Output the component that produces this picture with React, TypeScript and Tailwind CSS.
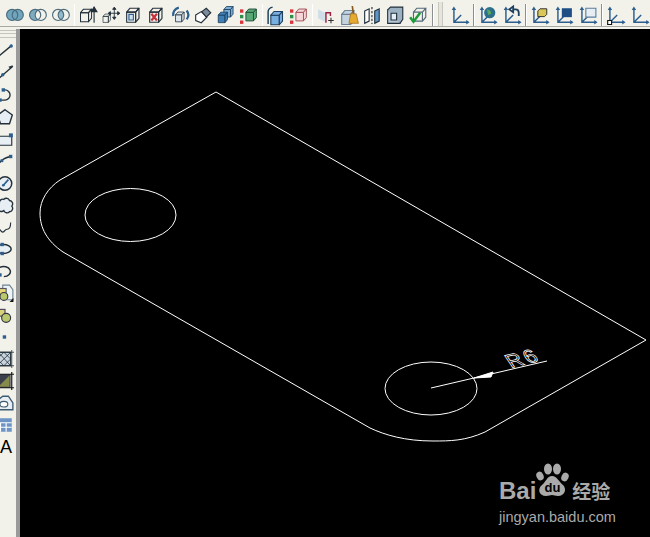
import React from 'react';

const AXIS = '#2c5f8f';
const DARK = '#23303a';

type Ic = React.ReactNode;

const Rings = ({ mode }: { mode: 'union' | 'subtract' | 'intersect' }) => (
	<>
		{mode === 'union' && (
			<>
				<circle cx="5.5" cy="8" r="5" fill="#6fa6bd" />
				<circle cx="10.5" cy="8" r="5" fill="#6fa6bd" />
			</>
		)}
		{mode === 'subtract' && <circle cx="5.5" cy="8" r="5" fill="#7fabbe" />}
		{mode === 'subtract' && <circle cx="10.5" cy="8" r="5" fill="#f2f1ea" />}
		{mode === 'intersect' && <path d="M8 3.7a5 5 0 0 1 0 8.6a5 5 0 0 1 0-8.6z" fill="#8fb8ca" />}
		<circle cx="5.5" cy="8" r="5" fill="none" stroke="#4a6b7c" />
		<circle cx="10.5" cy="8" r="5" fill="none" stroke="#4a6b7c" />
	</>
);

const Cube = ({ x = 0, y = 0, s = 1, fill = 'none', side = 'none', stroke = DARK }: { x?: number; y?: number; s?: number; fill?: string; side?: string; stroke?: string }) => (
	<g transform={`translate(${x} ${y}) scale(${s})`} stroke={stroke} strokeLinejoin="round">
		<path d="M1.5 5.5h8v9h-8z" fill={fill} />
		<path d="M1.5 5.5l3-3.5h8l-3 3.5z" fill={side === 'none' ? fill : side} />
		<path d="M9.5 5.5l3-3.5v9l-3 3.5z" fill={side === 'none' ? fill : side} />
	</g>
);

// the L shaped axis pair that all the UCS buttons share
const Ucs = ({ children }: { children?: Ic }) => (
	<>
		<path d="M3.5 2v12.5H16M3.5 14.5L10 8" fill="none" stroke={AXIS} strokeWidth="1.3" />
		<path d="M3.5 0.5l-2 3h4zM17.5 14.5l-3-2v4z" fill={AXIS} />
		{children}
	</>
);

const topGroups: Ic[][] = [
	[<Rings mode="union" />, <Rings mode="subtract" />, <Rings mode="intersect" />],
	[
		<><Cube y={1} s={0.9} /><path d="M13.5 15V4M13.5 1l-2.5 4h5z" fill={DARK} stroke={DARK} /></>,
		<><Cube y={6} s={0.6} /><path d="M11 2v9M6.5 6.500h9M11 1l-1.500 2h3zM11 12l-1.500-2h3zM5.500 6.500l2-1.500v3zM16 6.500l-2-1.500v3z" fill={DARK} stroke={DARK} strokeWidth="0.8" /></>,
		<><Cube /><path d="M3.500 7.500h4v5h-4z" fill="#cfe0ee" stroke="#2c5f8f" /></>,
		<><Cube /><path d="M3 7l5 6M8 7l-5 6" stroke="#c8323c" strokeWidth="2" /></>,
		<><Cube x={3} y={4} s={0.7} fill="#dbe6ef" /><path d="M2 9a6.500 6.500 0 0 1 5-7.500M14 4a6.500 6.500 0 0 1 0 8" fill="none" stroke="#2c5f8f" strokeWidth="2" /></>,
		<><path d="M1.500 8l5-3 5 5-5 5-5-2z" fill="#fff" stroke={DARK} /><path d="M7 5l4-3 4 4-4 4z" fill="#7d8c9a" stroke={DARK} /></>,
		<><Cube x={5} y={-1} s={0.75} fill="#7fb0d8" stroke="#1d3f5e" /><Cube x={0} y={4} s={0.75} fill="#3f7fb5" stroke="#1d3f5e" /></>,
		<><Cube x={4} y={1} s={0.85} fill="#58a878" stroke="#24503a" /><path d="M0 3h3v3H0z" fill="#d7353b" /><path d="M0 8h3v3H0z" fill="#2f8f4a" /><path d="M0 13h3v3H0z" fill="#d7353b" /></>,
	],
	[
		<><Cube x={2} y={3} s={0.95} fill="#79aee0" stroke="#1d3f5e" /><path d="M1 16V5q0-3 4-4" fill="none" stroke="#1d3f5e" strokeWidth="1.300" /></>,
		<><Cube x={4} y={1} s={0.85} fill="#f6d6d8" stroke="#a0525a" /><path d="M0 3h3v3H0z" fill="#d7353b" /><path d="M0 8h3v3H0z" fill="#2f8f4a" /><path d="M0 13h3v3H0z" fill="#d7353b" /></>,
	],
	[
		<><path d="M1 3l6 3v8L1 11z" fill="#cfdde8" /><path d="M7 6l4-3v5" fill="#e4edf3" /><path d="M8 15V6h4v3" fill="none" stroke="#a02040" strokeWidth="1.300" /><path d="M12.500 10.500v5M10 13h5" stroke="#333" /></>,
		<><Cube x={0} y={2} s={1} fill="#c3d3e0" stroke="#6d8294" /><path d="M11 0l1 7" stroke="#8a5a20" strokeWidth="1.500" /><path d="M9.500 7h5l2 8.500H8z" fill="#e5a92e" stroke="#a8701a" strokeWidth="0.700" /></>,
		<><path d="M1.500 4.500l4-2v11l-4 2z" fill="#fff" stroke={DARK} /><path d="M10.500 4.500l4-2v11l-4 2z" fill="#5f97c9" stroke={DARK} /><path d="M8 1v15" stroke={DARK} strokeDasharray="2 1.500" /></>,
		<><path d="M1.500 3.500h11v12h-11z" fill="#b7c9d7" stroke={DARK} /><path d="M1.500 3.500L4 1h11v11l-2.500 3.500" fill="#9cb2c3" stroke={DARK} /><path d="M4.500 6.500h5v6h-5z" fill="#e4edf3" stroke={DARK} /></>,
		<><path d="M4 5.500h8v8H4zM4 5.500L7 2h8l-3 3.500M12 13.500l3-3.500V2" fill="none" stroke="#52697a" /><path d="M1 10l3 4 6-8" fill="none" stroke="#1f9a3c" strokeWidth="2.200" /></>,
	],
];

const ucsGroups: Ic[][] = [
	[<Ucs />],
	[
		<Ucs><circle cx="10.500" cy="6" r="5" fill="#2b6f8d" /><path d="M8 3l3 1 1 3-3 1z" fill="#5aa85f" /></Ucs>,
		<Ucs><path d="M15 9V6q0-3-3-3H10M10 0.500L6.500 3 10 5.500z" fill="none" stroke="#1d3f5e" strokeWidth="1.600" /></Ucs>,
	],
	[
		<Ucs><path d="M9 2.500h6v5l-2 2H7v-5z" fill="#d9c75a" stroke="#222" strokeWidth="0.800" /></Ucs>,
		<Ucs><path d="M7 2h9v8H7z" fill="#1d4f86" /></Ucs>,
		<Ucs><path d="M7 2h9v8H7z" fill="#e6edf3" stroke="#5b7f9f" /></Ucs>,
	],
	[
		<Ucs><path d="M1.500 13h3.500v3.500H1.500z" fill="#fff" stroke="#111" /></Ucs>,
		<Ucs />,
	],
];

const sideIcons: Ic[] = [
	<><path d="M2 13L14 3" stroke={DARK} strokeWidth="1.200" /><circle cx="13.500" cy="3.500" r="1.500" fill={AXIS} /></>,
	<><path d="M1 14L15 2" stroke={DARK} strokeWidth="1.200" /><circle cx="6" cy="9.500" r="1.500" fill={AXIS} /><path d="M15 1l-4 1.500 2 2z" fill={DARK} /></>,
	<><path d="M3 12.500h5a4.500 4.500 0 0 0 0-9H6" fill="none" stroke={DARK} strokeWidth="1.200" /><rect x="2" y="11" width="3" height="3" fill={AXIS} /><rect x="5" y="2" width="3" height="3" fill={AXIS} /></>,
	<path d="M8 1.500l6.500 4.700-2.500 7.800H4L1.500 6.200z" fill="#e8eff4" stroke={DARK} strokeWidth="1.200" />,
	<><path d="M0 5.500h14v8H0z" fill="#e8eff4" stroke={DARK} /><rect x="11.500" y="3" width="3.500" height="3.500" fill={AXIS} /></>,
	<><path d="M1 14Q3 6 13 4" fill="none" stroke={DARK} strokeWidth="1.200" /><rect x="4" y="6.500" width="2.500" height="2.500" fill={AXIS} /><rect x="11.500" y="2.500" width="3" height="3" fill={AXIS} /></>,
	<><circle cx="8" cy="8.500" r="6" fill="#e8eff4" stroke={DARK} strokeWidth="1.300" /><path d="M6.500 10L11 5" stroke={AXIS} strokeWidth="1.500" /><circle cx="6.500" cy="10" r="1.200" fill={AXIS} /></>,
	<path d="M3 6a3 3 0 0 1 4-3a3 3 0 0 1 5 1a3 3 0 0 1 2 5a3 3 0 0 1-2 5a3 3 0 0 1-5-1a3 3 0 0 1-5-2a3 3 0 0 1 1-5z" fill="#e8eff4" stroke={DARK} strokeWidth="1.200" />,
	<path d="M0 11q2-3 4 0t4 0q1-1 2-1 3 0 3-6" fill="none" stroke={DARK} strokeWidth="1" />,
	<><ellipse cx="6.500" cy="8" rx="7" ry="4" fill="#e8eff4" stroke={DARK} strokeWidth="1.300" /><rect x="4" y="2.500" width="3" height="3" fill={AXIS} /><rect x="4" y="10.500" width="3" height="3" fill={AXIS} /></>,
	<><path d="M3 12a6 4.500 0 1 1 4 1" fill="none" stroke={DARK} strokeWidth="1.300" /><rect x="2" y="10" width="3" height="3" fill={AXIS} /></>,
	<><path d="M6 1h6l3 4v9H6z" fill="#eef3f6" stroke="#6b8396" /><rect x="1" y="4" width="8" height="7" fill="#e6d67a" stroke="#556" /><circle cx="7" cy="11" r="3.500" fill="#b9c86d" stroke="#334" /><path d="M12 16l3.500-3.500V16z" fill="#111" /></>,
	<><rect x="0" y="3" width="8" height="6" fill="#d9d27a" stroke="#445" /><circle cx="9" cy="10.500" r="4" fill="#b9c86d" stroke="#334" /></>,
	<rect x="6" y="6.500" width="3" height="3" fill={AXIS} />,
	<><rect x="1" y="2" width="12" height="12" fill="#c8d3dc" stroke={DARK} /><path d="M1 8l6-6M1 14L13 2M7 14l6-6M2 2l11 12M7 2l6 6M1 8l6 6M14 0v16M0 2h16M0 14h16" stroke={DARK} strokeWidth="0.700" /></>,
	<><rect x="1" y="2" width="12" height="12" fill="#3b3f4a" /><path d="M2 13L12 3v10z" fill="#868a4a" /><path d="M14 0v16M0 2h16M0 14h16" stroke="#111" /></>,
	<><path d="M1 14V6l5-4h5l4 6v6z" fill="#e8eff4" stroke="#3d5a70" strokeWidth="1.200" /><ellipse cx="7" cy="9" rx="3.500" ry="2.500" fill="#fff" stroke="#3d5a70" /></>,
	<><rect x="0" y="2" width="14" height="12" fill="#6d94c4" /><path d="M0 6h14M0 10h14M4 6v8M9 6v8" stroke="#fff" /></>,
];

const TopIcon = ({ icon, w }: { icon: Ic; w: string }) => (
	<div className={`flex justify-center ${w}`}>
		<svg width="19" height="19" viewBox="0 0 17 17" className="overflow-visible">{icon}</svg>
	</div>
);

const Sep = ({ className }: { className: string }) => <div className={`h-[23px] w-[2px] bg-[#8b8f92] border-r border-white ${className}`} />;

const Toolbar = () => (
	<div className="shrink-0 bg-[#f2f1ea] pb-[2px]">
		<div className="flex h-[27px] items-center overflow-hidden border-b border-[#a8a8a4] pl-[3.500px] pt-[4px]">
			{topGroups.map((group, i) => (
				<React.Fragment key={i}>
					{i > 0 && <Sep className="ml-[1px] mr-[2px]" />}
					{group.map((icon, j) => (
						<TopIcon key={j} icon={icon} w="w-[23px] shrink-0" />
					))}
				</React.Fragment>
			))}
			<Sep className="ml-[2px] mr-[4px] shrink-0" />
			<div className="mr-[5px] h-[26px] w-[5px] shrink-0 border-x border-[#c8c8c0] bg-[#e6e5dd]" />
			{ucsGroups.map((group, i) => (
				<React.Fragment key={i}>
					{i > 0 && <Sep className="ml-[1px] mr-[1px] shrink-0" />}
					{group.map((icon, j) => (
						<TopIcon key={j} icon={icon} w="w-[24px] shrink-0" />
					))}
				</React.Fragment>
			))}
		</div>
	</div>
);

const SideBar = () => (
	<div className="flex w-[20px] shrink-0 border-r-[4px] border-[#9a9a9a] bg-[#f2f1ea]">
		<div className="w-full overflow-hidden">
			<div className="mt-[1px] flex h-[8px] flex-col justify-between border-y border-[#c4c4bc] py-[2px]">
				<div className="h-px bg-[#c4c4bc]" />
			</div>
			<div className="mt-[2px] flex flex-col">
				{sideIcons.map((icon, i) => (
					<div key={i} className="-ml-[4px] flex h-[22px] items-center">
						<svg width="18" height="18" viewBox="0 0 16 16" className="shrink-0 overflow-visible">{icon}</svg>
					</div>
				))}
				<div className="h-[22px] font-['Liberation_Sans',sans-serif] text-[18px] leading-[22px] text-black">A</div>
			</div>
		</div>
	</div>
);

const Drawing = () => (
	<svg className="block h-full w-full" viewBox="20 29 630 508" fill="none" stroke="#fff" strokeWidth="1">
		<path d="M216 92L646 340L485 432C465 441 450 441 433 441C405 441 385 435 370 428L63 252C47 241 40 228 40 213C40 200 48 188 60 180Z" />
		<ellipse cx="130.500" cy="215" rx="45.500" ry="26.500" />
		<ellipse cx="431" cy="388.500" rx="46" ry="26.500" />
		<path d="M431 388L547 361" />
		<path d="M474 378L493 372L491 377Z" fill="#fff" />
		<text
			transform="matrix(0.97 -0.24 0.56 0.83 511 368)"
			fontFamily="Liberation Sans, sans-serif"
			fontSize="21"
			letterSpacing="3"
			strokeWidth="0.800"
			opacity="0.99"
		>
			R6
		</text>
	</svg>
);

const Watermark = () => (
	<div className="absolute left-[479px] top-[418px] flex w-[125px] flex-col font-['Liberation_Sans',sans-serif] text-[#aaaaaa]">
		<div className="flex h-[60px] items-end">
			<span className="text-[24px] font-bold leading-[32px]">Bai</span>
			<svg width="36" height="46" viewBox="0 0 36 46" className="-ml-[1px] mb-[3px]">
				<ellipse cx="5" cy="18" rx="3.500" ry="4.500" fill="#aaaaaa" transform="rotate(-25 5 18)" />
				<ellipse cx="13" cy="11" rx="4" ry="5.500" fill="#aaaaaa" />
				<ellipse cx="22" cy="11" rx="4" ry="5.500" fill="#aaaaaa" />
				<ellipse cx="30" cy="19" rx="3.500" ry="4.500" fill="#aaaaaa" transform="rotate(25 30 19)" />
				<path d="M17 18c5 0 7 6 11 9 4 4 2 11-5 11-3 0-4-1-6-1s-3 1-6 1c-7 0-9-7-4-11 4-3 5-9 10-9z" fill="#aaaaaa" />
				<text x="17.500" y="34" textAnchor="middle" fontFamily="Liberation Sans, sans-serif" fontSize="13" fontWeight="700" fill="#000">du</text>
			</svg>
			<span className="ml-[1px] font-['Noto_Sans_CJK_SC',sans-serif] text-[19px] font-bold leading-[32px]">经验</span>
		</div>
		<div className="mt-[2px] whitespace-nowrap text-[14.500px] leading-[16px]">jingyan.baidu.com</div>
	</div>
);

const App = () => (
	<div className="flex h-[537px] w-[650px] flex-col overflow-hidden bg-black">
		<Toolbar />
		<div className="flex min-h-0 flex-1">
			<SideBar />
			<div className="relative flex-1 bg-black">
				<Drawing />
				<Watermark />
			</div>
		</div>
	</div>
);

export default App;
